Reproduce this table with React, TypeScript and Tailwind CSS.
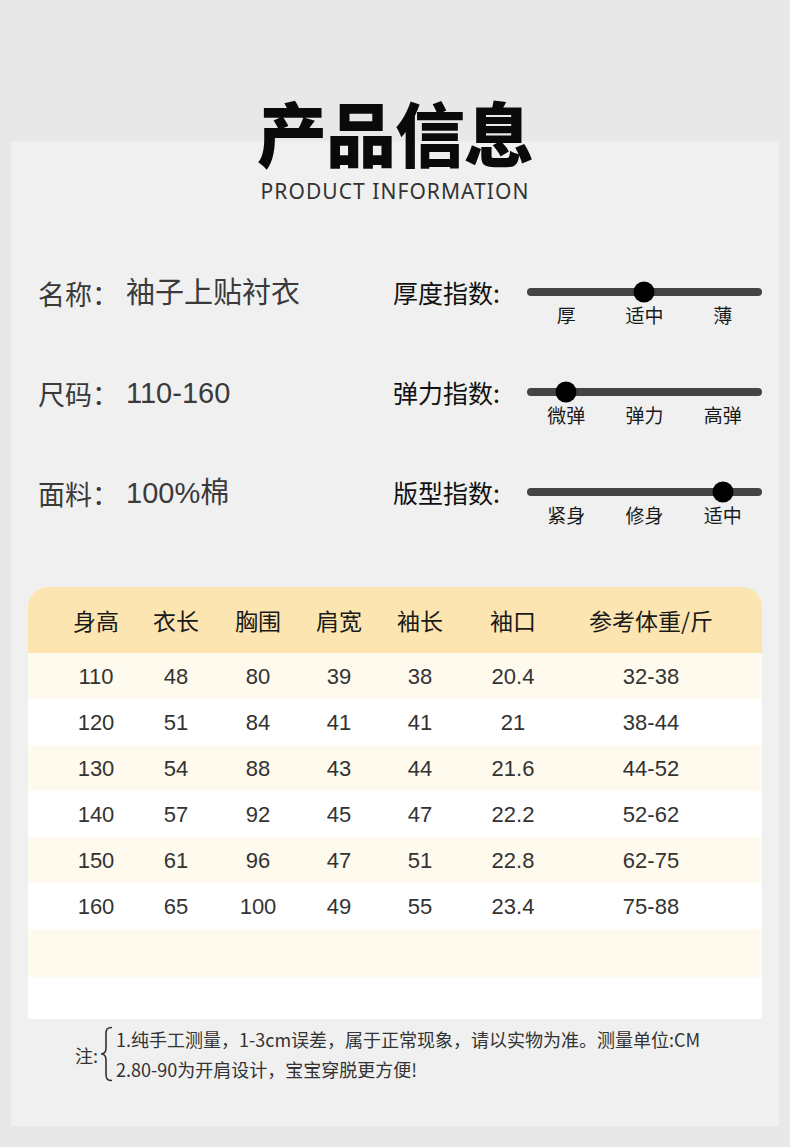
import React from "react";

const cjk = { fontFamily: '"Noto Sans CJK SC", sans-serif' };
const mixed = { fontFamily: '"Liberation Sans", "Noto Sans CJK SC", sans-serif' };

const knobPos = ["left-[39px]", "left-[117px]", "left-[196px]"];

function Slider({ label, opts, idx }: { label: string; opts: string[]; idx: number }) {
  return (
    <div className="flex">
      <div className="w-[134px] text-[25px] leading-[30px] -mt-[2px] text-[#111]" style={cjk}>
        {label}
      </div>
      <div className="w-[235px] flex flex-col">
        <div className="h-[30px] flex items-center">
          <div className="relative w-full h-[8px] -mt-[5px] rounded-full bg-[#444]">
            <div
              className={`absolute top-1/2 -translate-x-1/2 -translate-y-1/2 w-[21px] h-[21px] rounded-full bg-black ${knobPos[idx]}`}
            />
          </div>
        </div>
        <div className="grid grid-cols-3 text-center text-[19px] leading-[24px] text-[#1a1a1a] -mt-[6px]" style={cjk}>
          {opts.map((o) => (
            <div key={o}>{o}</div>
          ))}
        </div>
      </div>
    </div>
  );
}

const rows = [
  ["110", "48", "80", "39", "38", "20.4", "32-38"],
  ["120", "51", "84", "41", "41", "21", "38-44"],
  ["130", "54", "88", "43", "44", "21.6", "44-52"],
  ["140", "57", "92", "45", "47", "22.2", "52-62"],
  ["150", "61", "96", "47", "51", "22.8", "62-75"],
  ["160", "65", "100", "49", "55", "23.4", "75-88"],
];
const heads = ["身高", "衣长", "胸围", "肩宽", "袖长", "袖口", "参考体重/斤"];
const gridCols = "grid grid-cols-[80px_80px_84px_78px_84px_102px_174px] pl-[28px]";

export default function App() {
  return (
    <div className="w-[790px] h-[1147px] bg-[#e8e8e8] pt-[141px] px-[11px] overflow-hidden">
      <div className="h-[985px] bg-[#f0f0f0] flex flex-col">
        <div className="-mt-[44px] flex flex-col items-center">
          <div className="text-[70px] leading-[70px] font-black text-[#0a0a0a] tracking-[-1px]" style={cjk}>
            产品信息
          </div>
          <div
            className="mt-[12px] text-[21px] leading-[24px] text-[#333] tracking-[1.05px]"
            style={{ fontFamily: '"Noto Sans", sans-serif' }}
          >
            PRODUCT INFORMATION
          </div>
        </div>

        <div className="mt-[76px] flex flex-col gap-[40px] pl-[27px]">
          {[
            ["名称：", "袖子上贴衬衣", "厚度指数:", ["厚", "适中", "薄"], 1],
            ["尺码：", "110-160", "弹力指数:", ["微弹", "弹力", "高弹"], 0],
            ["面料：", "100%棉", "版型指数:", ["紧身", "修身", "适中"], 2],
          ].map(([k, v, l, o, i]) => (
            <div key={k as string} className="flex h-[60px]">
              <div className="w-[355px] flex items-center h-[30px] text-[#3a3a3a]" style={mixed}>
                <span className="text-[27px]" style={cjk}>
                  {k as string}
                </span>
                <span className="ml-[7px] text-[29px]">{v as string}</span>
              </div>
              <Slider label={l as string} opts={o as string[]} idx={i as number} />
            </div>
          ))}
        </div>

        <div className="mt-[48px] mx-[17px] bg-white rounded-t-[20px] overflow-hidden">
          <div className={`${gridCols} h-[66px] items-center bg-[#fce5b0] text-[23px] text-[#1a1a1a]`} style={cjk}>
            {heads.map((h) => (
              <div key={h} className="text-center">
                {h}
              </div>
            ))}
          </div>
          {rows.map((r, ri) => (
            <div
              key={r[0]}
              className={`${gridCols} h-[46px] items-center text-[22px] text-[#333] ${ri % 2 === 0 ? "bg-[#fffaee]" : "bg-white"}`}
              style={mixed}
            >
              {r.map((c, ci) => (
                <div key={ci} className="text-center">
                  {c}
                </div>
              ))}
            </div>
          ))}
          <div className="h-[48px] bg-[#fffaee]" />
          <div className="h-[42px] bg-white" />
        </div>

        <div className="mt-[5px] pl-[64px] flex items-center text-[#333]" style={cjk}>
          <div className="text-[18px] leading-[24px] mt-[2px]">注:</div>
          <svg width="16" height="56" viewBox="0 0 16 56" className="ml-[1px]">
            <path
              d="M13 1.5 C8 1.5 7 3.5 7 8 L7 22 C7 26 5 28 2 28 C5 28 7 30 7 34 L7 48 C7 52.5 8 54.5 13 54.5"
              fill="none"
              stroke="#333"
              strokeWidth="1.6"
            />
          </svg>
          <div className="flex flex-col text-[18px] leading-[30px] ml-[1px]">
            <div>1.纯手工测量，1-3cm误差，属于正常现象，请以实物为准。测量单位:CM</div>
            <div>2.80-90为开肩设计，宝宝穿脱更方便!</div>
          </div>
        </div>
      </div>
    </div>
  );
}
